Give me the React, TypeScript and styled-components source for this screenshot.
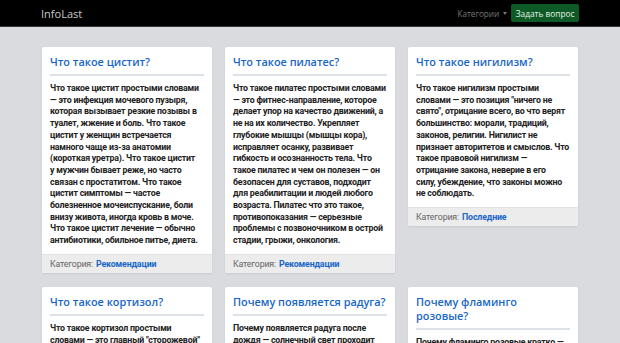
import React from 'react';
import styled, { createGlobalStyle } from 'styled-components';

const GlobalStyle = createGlobalStyle`
  html, body {
    margin: 0;
    padding: 0;
    background: #dadbdf;
  }
  * {
    box-sizing: border-box;
  }
`;

const Navbar = styled.header`
  height: 27px;
  background: #000;
  border-bottom: 1px solid #3a3a3a;
  display: flex;
  align-items: center;
  justify-content: space-between;
  padding: 0 41px;
`;

const Brand = styled.a`
  font-family: 'Open Sans', sans-serif;
  font-size: 11px;
  color: #c8c8c8;
  text-decoration: none;
`;

const NavRight = styled.div`
  display: flex;
  align-items: center;
  gap: 4px;
`;

const NavLink = styled.span`
  font-family: 'Open Sans', sans-serif;
  font-size: 8.2px;
  color: #777;
  display: flex;
  align-items: center;
  gap: 2px;
`;

const Caret = styled.span`
  border-top: 3px solid #777;
  border-left: 2.5px solid transparent;
  border-right: 2.5px solid transparent;
  margin-left: 2px;
`;

const AskButton = styled.button`
  height: 18px;
  padding: 0 4.5px;
  background: #0d5a26;
  border: none;
  border-radius: 2px;
  color: #e6f2e8;
  font-family: 'Open Sans', sans-serif;
  font-size: 8.3px;
`;

const Main = styled.main`
  padding: 20px 42px;
`;

const Grid = styled.div`
  display: grid;
  grid-template-columns: repeat(3, 170px);
  column-gap: 13px;
  row-gap: 14px;
  align-items: start;
`;

const Card = styled.article`
  background: #fff;
  border-radius: 2px;
  box-shadow: 0 1px 2px rgba(0, 0, 0, 0.08);
  overflow: hidden;
`;

const CardBody = styled.div`
  padding: 8px 8px 7px;
`;

const CardTitle = styled.h2`
  margin: 0;
  font-family: 'Open Sans', sans-serif;
  font-size: 10.9px;
  font-weight: 600;
  line-height: 14px;
  color: #1766c7;
`;

const Divider = styled.hr`
  margin: 5px 0 7px;
  border: none;
  border-top: 2px solid #dde2e9;
`;

const CardText = styled.p`
  margin: 0;
  font-family: Roboto, sans-serif;
  font-size: 8.8px;
  letter-spacing: -0.2px;
  font-weight: bold;
  line-height: 11.7px;
  color: #222;
`;

const Line = styled.span`
  display: block;
  white-space: nowrap;
`;

const CardFooter = styled.footer`
  background: #ececec;
  border-top: 1px solid #e2e2e2;
  height: 19px;
  padding: 0 8px;
  display: flex;
  align-items: center;
  gap: 3px;
  font-family: Roboto, sans-serif;
  font-size: 8.8px;
  letter-spacing: -0.15px;
`;

const FooterLabel = styled.span`
  color: #666;
`;

const FooterLink = styled.a`
  color: #1766c7;
  font-weight: bold;
  text-decoration: none;
`;

type Post = {
  title: string;
  lines: string[];
  category?: string;
};

const posts: Post[] = [
  {
    title: 'Что такое цистит?',
    lines: [
      'Что такое цистит простыми словами',
      '— это инфекция мочевого пузыря,',
      'которая вызывает резкие позывы в',
      'туалет, жжение и боль. Что такое',
      'цистит у женщин встречается',
      'намного чаще из-за анатомии',
      '(короткая уретра). Что такое цистит',
      'у мужчин бывает реже, но часто',
      'связан с простатитом. Что такое',
      'цистит симптомы — частое',
      'болезненное мочеиспускание, боли',
      'внизу живота, иногда кровь в моче.',
      'Что такое цистит лечение — обычно',
      'антибиотики, обильное питье, диета.',
    ],
    category: 'Рекомендации',
  },
  {
    title: 'Что такое пилатес?',
    lines: [
      'Что такое пилатес простыми словами',
      '— это фитнес-направление, которое',
      'делает упор на качество движений, а',
      'не на их количество. Укрепляет',
      'глубокие мышцы (мышцы кора),',
      'исправляет осанку, развивает',
      'гибкость и осознанность тела. Что',
      'такое пилатес и чем он полезен — он',
      'безопасен для суставов, подходит',
      'для реабилитации и людей любого',
      'возраста. Пилатес что это такое,',
      'противопоказания — серьезные',
      'проблемы с позвоночником в острой',
      'стадии, грыжи, онкология.',
    ],
    category: 'Рекомендации',
  },
  {
    title: 'Что такое нигилизм?',
    lines: [
      'Что такое нигилизм простыми',
      'словами — это позиция "ничего не',
      'свято", отрицание всего, во что верят',
      'большинство: морали, традиций,',
      'законов, религии. Нигилист не',
      'признает авторитетов и смыслов. Что',
      'такое правовой нигилизм —',
      'отрицание закона, неверие в его',
      'силу, убеждение, что законы можно',
      'не соблюдать.',
    ],
    category: 'Последние',
  },
  {
    title: 'Что такое кортизол?',
    lines: [
      'Что такое кортизол простыми',
      'словами — это главный "сторожевой"',
      'гормон стресса, который',
      'вырабатывают надпочечники.',
    ],
  },
  {
    title: 'Почему появляется радуга?',
    lines: [
      'Почему появляется радуга после',
      'дождя — солнечный свет проходит',
      'через капли воды и преломляется.',
    ],
  },
  {
    title: 'Почему фламинго розовые?',
    lines: ['Почему фламинго розовые кратко —', 'из-за пигментов в пище.'],
  },
];

export default function App() {
  return (
    <>
      <GlobalStyle />
      <Navbar>
        <Brand href="#">InfoLast</Brand>
        <NavRight>
          <NavLink>
            Категории
            <Caret />
          </NavLink>
          <AskButton>Задать вопрос</AskButton>
        </NavRight>
      </Navbar>
      <Main>
        <Grid>
          {posts.map((p, i) => (
            <Card key={i}>
              <CardBody>
                <CardTitle>{p.title}</CardTitle>
                <Divider />
                <CardText>
                  {p.lines.map((l, j) => (
                    <Line key={j}>{l}</Line>
                  ))}
                </CardText>
              </CardBody>
              {p.category && (
                <CardFooter>
                  <FooterLabel>Категория:</FooterLabel>
                  <FooterLink href="#">{p.category}</FooterLink>
                </CardFooter>
              )}
            </Card>
          ))}
        </Grid>
      </Main>
    </>
  );
}
